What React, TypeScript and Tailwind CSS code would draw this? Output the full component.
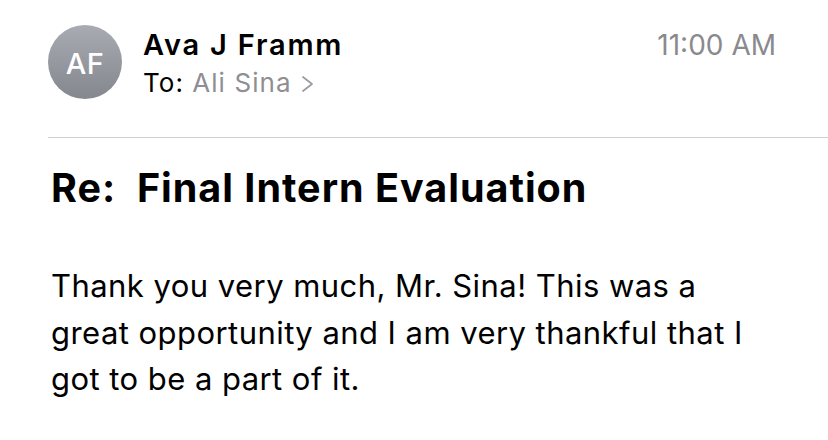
import React from "react";

export default function App() {
  return (
    <div
      className="w-[828px] h-[440px] bg-white overflow-hidden text-black"
      style={{ fontFamily: "Inter, 'Noto Sans', sans-serif" }}
    >
      <div className="flex items-start pt-[25px] pl-[48px] pr-[52px]">
        <div className="w-[74px] h-[74px] rounded-full bg-gradient-to-b from-[#a9abb2] to-[#85878f] flex items-center justify-center shrink-0">
          <span className="mt-[3px] text-white text-[29px] font-medium leading-none tracking-[0.5px]">AF</span>
        </div>
        <div className="ml-[21px] pt-[1px] flex flex-col flex-1">
          <div className="text-[29px] leading-[38px] font-semibold tracking-[1.8px]">Ava J Framm</div>
          <div className="flex items-center text-[26px] leading-[38px] tracking-[1.1px]">
            <span>To:</span>
            <span className="ml-[8px] text-[#8e8e93]">Ali Sina</span>
            <svg width="14" height="18" viewBox="0 0 14 18" className="ml-[9px] mt-[1px]">
              <polyline points="2,2 11,9 2,16" fill="none" stroke="#9a9aa0" strokeWidth="1.7" strokeLinecap="round" strokeLinejoin="round" />
            </svg>
          </div>
        </div>
        <div className="text-[28px] leading-[38px] text-[#8a8a8e] pt-[1px]">11:00 AM</div>
      </div>
      <div className="mt-[35px] ml-[48px] h-px bg-[#cfcfd3]" />
      <div className="pl-[51px] pt-[26px] text-[39.5px] leading-[48px] font-bold tracking-[1px] whitespace-pre">
        Re:  Final Intern Evaluation
      </div>
      <div className="pl-[51px] pr-[30px] pt-[51px] text-[31px] leading-[46.5px] tracking-[0.45px]">
        <div>Thank you very much, Mr. Sina! This was a</div>
        <div>great opportunity and I am very thankful that I</div>
        <div>got to be a part of it.</div>
      </div>
    </div>
  );
}
